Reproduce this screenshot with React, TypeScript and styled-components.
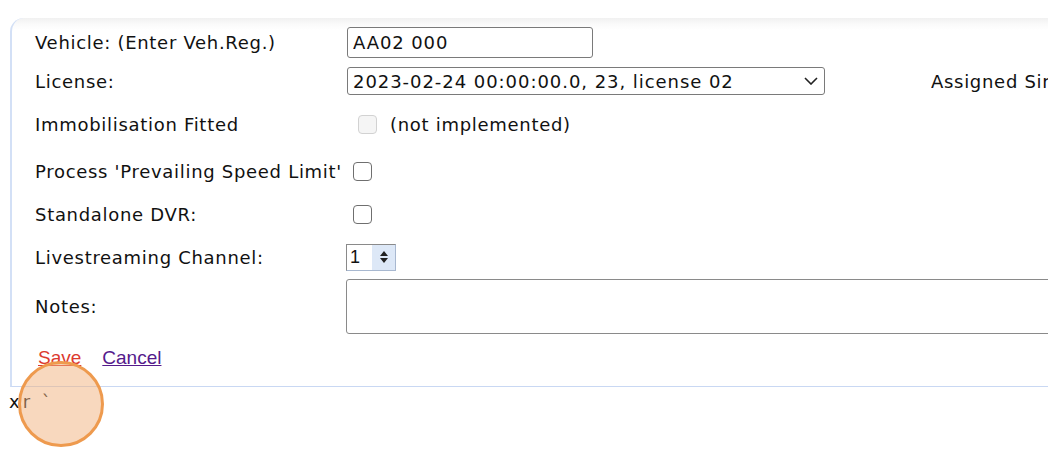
import React from 'react';
import styled, { createGlobalStyle } from 'styled-components';

const GlobalStyle = createGlobalStyle`
  html, body {
    margin: 0;
    padding: 0;
    background: #fff;
    overflow: hidden;
  }
  body {
    font-family: 'DejaVu Sans', Verdana, sans-serif;
    letter-spacing: 0.7px;
    color: #111;
  }
`;

const Page = styled.div`
  position: relative;
  width: 1048px;
  height: 452px;
  padding-top: 18px;
  box-sizing: border-box;
  overflow: hidden;
`;

const Panel = styled.div`
  width: 1300px;
  margin-left: 10px;
  padding: 6px 0 7px 23px;
  border-left: 2px solid #d3e0f6;
  border-bottom: 1px solid #c9d8f3;
  border-top-left-radius: 14px;
  background: linear-gradient(to bottom, #f1f1f1 0, #fafafa 6px, #fff 12px);
`;

const Row = styled.div<{ $h: number; $pt?: number }>`
  display: grid;
  grid-template-columns: 312px 584px 1fr;
  align-items: center;
  box-sizing: border-box;
  height: ${(p) => p.$h}px;
  padding-top: ${(p) => p.$pt ?? 0}px;
`;

const Label = styled.span`
  font-size: 18px;
  white-space: nowrap;
`;

const Cell = styled.div`
  display: flex;
  align-items: center;
  gap: 13px;
`;

const TextInput = styled.input`
  width: 246px;
  height: 31px;
  box-sizing: border-box;
  border: 1px solid #7a7a7a;
  border-radius: 3px;
  padding: 0 5px;
  font: 18px 'DejaVu Sans', Verdana, sans-serif;
  letter-spacing: 0.9px;
  color: #111;
  outline: none;
`;

const SelectBox = styled.div`
  width: 478px;
  height: 28px;
  box-sizing: border-box;
  border: 1px solid #7a7a7a;
  border-radius: 3px;
  padding: 0 6px 0 5px;
  display: flex;
  align-items: center;
  justify-content: space-between;
  font-size: 18px;
  letter-spacing: 0.95px;
  white-space: nowrap;
`;

const Chevron = () => (
  <svg width="14" height="8" viewBox="0 0 14 8">
    <path d="M1 1l6 6 6-6" fill="none" stroke="#222" strokeWidth="1.6" />
  </svg>
);

const Box = styled.span<{ $disabled?: boolean; $offset?: number }>`
  display: inline-block;
  width: 19px;
  height: 19px;
  box-sizing: border-box;
  margin-left: ${(p) => p.$offset ?? 6}px;
  border: 1px solid ${(p) => (p.$disabled ? '#d2d2d2' : '#6f6f6f')};
  border-radius: 4px;
  background: ${(p) => (p.$disabled ? '#f5f5f5' : '#fff')};
`;

const Muted = styled.span`
  font-size: 18px;
`;

const Spinner = styled.div`
  display: flex;
  width: 50px;
  height: 27px;
  margin-left: -1px;
  box-sizing: border-box;
  border: 1px solid #a8b8d0;
  border-top-color: #8a8a8a;
  border-left-color: #8a8a8a;
`;

const SpinValue = styled.span`
  width: 22px;
  font: 18px 'Liberation Sans', Arial, sans-serif;
  line-height: 25px;
  padding-left: 3px;
  background: #fff;
`;

const SpinArrows = styled.div`
  flex: 1;
  display: flex;
  align-items: center;
  justify-content: center;
  background: #dde8f7;
`;

const Arrows = () => (
  <svg width="10" height="14" viewBox="0 0 10 14">
    <path d="M5 1l4 5H1z M5 13l4-5H1z" fill="#222" />
  </svg>
);

const Notes = styled.div`
  width: 760px;
  height: 55px;
  box-sizing: border-box;
  margin-left: -1px;
  border: 1px solid #8a8a8a;
  border-radius: 3px;
  grid-column: 2 / 4;
`;

const Side = styled.div`
  width: 118px;
  overflow: hidden;
`;

const Actions = styled.div`
  display: flex;
  align-items: center;
  gap: 21px;
  box-sizing: border-box;
  padding: 3px 0 0 3px;
  height: 45px;
  font: 19px 'Liberation Sans', Arial, sans-serif;
  letter-spacing: 0;
`;

const Action = styled.a<{ $color: string }>`
  color: ${(p) => p.$color};
  text-decoration: underline;
  cursor: pointer;
`;

const Trailing = styled.div`
  font-size: 18px;
  letter-spacing: 3px;
  margin-top: 4px;
  margin-left: 9px;
`;

const ClickMark = styled.div`
  position: absolute;
  left: 18px;
  top: 361px;
  width: 86px;
  height: 86px;
  box-sizing: border-box;
  border-radius: 50%;
  border: 3px solid #ee9a4e;
  background: rgba(242, 178, 125, 0.5);
`;

export default function App() {
  return (
    <Page>
      <GlobalStyle />
      <Panel>
        <Row $h={36}>
          <Label>Vehicle: (Enter Veh.Reg.)</Label>
          <Cell>
            <TextInput defaultValue="AA02 000" />
          </Cell>
        </Row>
        <Row $h={42}>
          <Label>License:</Label>
          <Cell>
            <SelectBox>
              <span>2023-02-24 00:00:00.0, 23, license 02</span>
              <Chevron />
            </SelectBox>
          </Cell>
          <Side>
            <Label>Assigned Sim</Label>
          </Side>
        </Row>
        <Row $h={44}>
          <Label>Immobilisation Fitted</Label>
          <Cell>
            <Box $disabled $offset={11} />
            <Muted>(not implemented)</Muted>
          </Cell>
        </Row>
        <Row $h={50}>
          <Label>Process 'Prevailing Speed Limit'</Label>
          <Cell>
            <Box />
          </Cell>
        </Row>
        <Row $h={36}>
          <Label>Standalone DVR:</Label>
          <Cell>
            <Box />
          </Cell>
        </Row>
        <Row $h={46} $pt={4}>
          <Label>Livestreaming Channel:</Label>
          <Cell>
            <Spinner>
              <SpinValue>1</SpinValue>
              <SpinArrows>
                <Arrows />
              </SpinArrows>
            </Spinner>
          </Cell>
        </Row>
        <Row $h={56}>
          <Label>Notes:</Label>
          <Notes />
        </Row>
        <Actions>
          <Action $color="#dc3a2f">Save</Action>
          <Action $color="#551a8b">Cancel</Action>
        </Actions>
      </Panel>
      <Trailing>xr `</Trailing>
      <ClickMark />
    </Page>
  );
}
